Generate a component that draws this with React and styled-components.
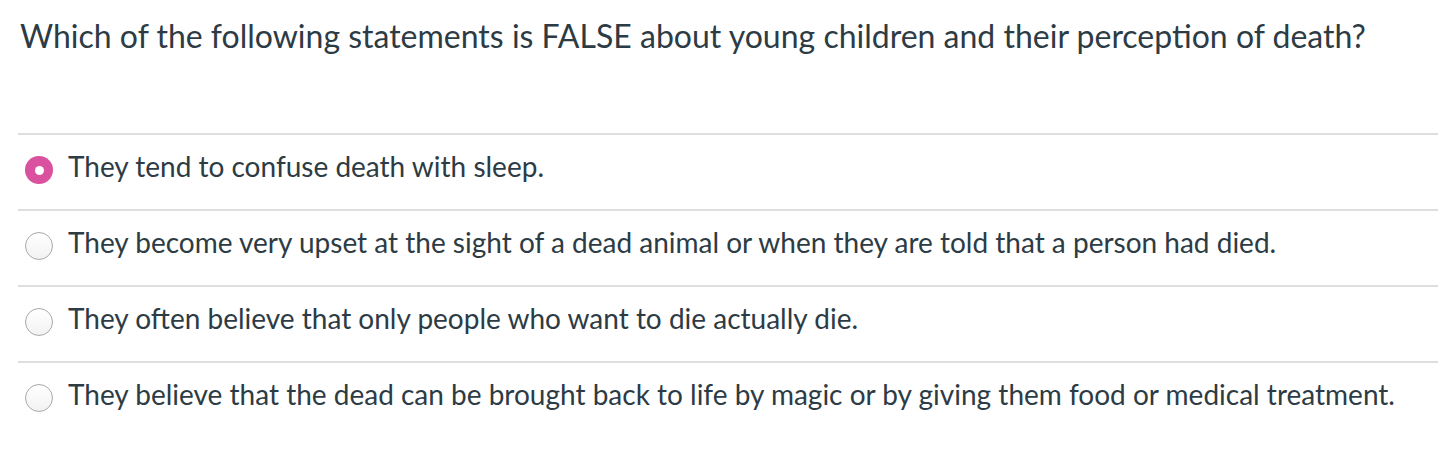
import styled, { createGlobalStyle } from 'styled-components'

const GlobalStyle = createGlobalStyle`
  body {
    margin: 0;
    background: #fff;
    font-family: Lato, "Noto Sans", sans-serif;
    color: #2d3b45;
  }
`

const Question = styled.div`
  padding: 13px 0 0 18px;
`

const Title = styled.h1`
  margin: 0 0 0 2px;
  font-size: 32px;
  font-weight: 400;
  line-height: 46px;
`

const Answers = styled.div`
  margin-top: 74px;
`

const Row = styled.label`
  box-sizing: border-box;
  display: flex;
  align-items: flex-start;
  gap: 15px;
  height: 76px;
  padding: 14px 0 0 7px;
  border-top: 2px solid #dedede;
  font-size: 28px;
  line-height: 34px;
  cursor: pointer;
`

const Radio = styled.span`
  box-sizing: border-box;
  flex: none;
  margin-top: 7px;
  inline-size: 28px;
  block-size: 28px;
  border-radius: 50%;
  display: flex;
  align-items: center;
  justify-content: center;
  background: ${p => (p.$checked ? '#d9519f' : 'linear-gradient(#fff, #f2f2f2)')};
  border: ${p => (p.$checked ? 'none' : '1.5px solid #a9a9a9')};

  &::after {
    content: '';
    display: ${p => (p.$checked ? 'block' : 'none')};
    inline-size: 9px;
    block-size: 9px;
    border-radius: 50%;
    background: #fff;
  }
`

const answers = [
  'They tend to confuse death with sleep.',
  'They become very upset at the sight of a dead animal or when they are told that a person had died.',
  'They often believe that only people who want to die actually die.',
  'They believe that the dead can be brought back to life by magic or by giving them food or medical treatment.',
]

export default function App() {
  return (
    <>
      <GlobalStyle />
      <Question>
        <Title>Which of the following statements is FALSE about young children and their perception of death?</Title>
        <Answers>
          {answers.map((text, i) => (
            <Row key={i}>
              <Radio $checked={i === 0} />
              <span>{text}</span>
            </Row>
          ))}
        </Answers>
      </Question>
    </>
  )
}
